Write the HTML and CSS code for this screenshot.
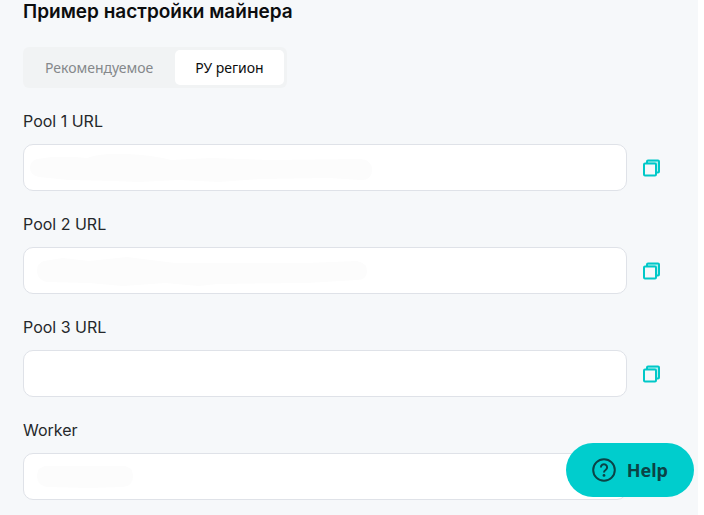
FILE: index.html
```html
<!DOCTYPE html>
<html lang="ru">
<head>
  <meta charset="UTF-8">
  <meta name="viewport" content="width=device-width, initial-scale=1.0">
  <title>Пример настройки майнера</title>
  <link rel="stylesheet" href="styles.css">
</head>
<body>

<main class="miner-settings">
  <h1 class="title">Пример настройки майнера</h1>

  <div class="tabs">
    <button class="tab" type="button">Рекомендуемое</button>
    <button class="tab active" type="button">РУ регион</button>
  </div>

  <div class="field">
    <label for="pool1">Pool 1 URL</label>
    <div class="field-row">
      <div class="input-box">
        <input id="pool1" type="text" readonly>
        <svg class="mask" width="352" height="32" viewBox="0 0 352 32" aria-hidden="true">
          <path d="M8 7Q30 3 58 6Q72 1 98 2Q124 3 142 8L182 6L240 8L332 7Q343 8 343 18Q343 28 332 28L300 26L230 27L190 30L150 28L110 30L84 29L40 28L10 25Q1 23 1 16Q1 9 8 7Z"/>
        </svg>
      </div>
      <button class="copy-btn" type="button" aria-label="Copy Pool 1 URL">
        <svg width="17" height="18" viewBox="0 0 17 18">
          <path d="M4 4V2.5Q4 1.5 5 1.5H15Q16 1.5 16 2.5V12.5Q16 13.5 15 13.5H13.5"/>
          <rect x="1" y="4.5" width="12" height="12" rx="1"/>
        </svg>
      </button>
    </div>
  </div>

  <div class="field">
    <label for="pool2">Pool 2 URL</label>
    <div class="field-row">
      <div class="input-box">
        <input id="pool2" type="text" readonly>
        <svg class="mask" width="352" height="32" viewBox="0 0 352 32" aria-hidden="true">
          <path d="M15 6L34 3L60 6L98 2L146 8L220 8L278 8L328 6Q338 8 338 16Q338 25 328 25L278 28L188 29L170 31L136 28L94 31L60 28L18 27Q8 25 8 16Q8 8 15 6Z"/>
        </svg>
      </div>
      <button class="copy-btn" type="button" aria-label="Copy Pool 2 URL">
        <svg width="17" height="18" viewBox="0 0 17 18">
          <path d="M4 4V2.5Q4 1.5 5 1.5H15Q16 1.5 16 2.5V12.5Q16 13.5 15 13.5H13.5"/>
          <rect x="1" y="4.5" width="12" height="12" rx="1"/>
        </svg>
      </button>
    </div>
  </div>

  <div class="field">
    <label for="pool3">Pool 3 URL</label>
    <div class="field-row">
      <div class="input-box">
        <input id="pool3" type="text" readonly>
      </div>
      <button class="copy-btn" type="button" aria-label="Copy Pool 3 URL">
        <svg width="17" height="18" viewBox="0 0 17 18">
          <path d="M4 4V2.5Q4 1.5 5 1.5H15Q16 1.5 16 2.5V12.5Q16 13.5 15 13.5H13.5"/>
          <rect x="1" y="4.5" width="12" height="12" rx="1"/>
        </svg>
      </button>
    </div>
  </div>

  <div class="field">
    <label for="worker">Worker</label>
    <div class="field-row">
      <div class="input-box">
        <input id="worker" type="text" readonly>
        <svg class="mask" width="352" height="32" viewBox="0 0 352 32" aria-hidden="true">
          <path d="M16 5H96Q104 7 104 15Q104 25 94 26L60 27L18 26Q8 24 8 15Q8 7 16 5Z"/>
        </svg>
      </div>
    </div>
  </div>
</main>

<button class="help-btn" type="button">
  <svg width="24" height="24" viewBox="0 0 24 24" aria-hidden="true">
    <circle cx="12" cy="12" r="10.8"/>
    <path d="M8.9 9.4A3.1 3.1 0 1 1 13.6 12Q12 13 12 14.6"/>
    <circle class="dot" cx="12" cy="17.4" r="1.4"/>
  </svg>
  Help
</button>

</body>
</html>
```
FILE: styles.css
```css
* {
  box-sizing: border-box;
}

body {
  font-family: Inter, "Noto Sans", sans-serif;
  background-color: #fff;
  color: #25282b;
  margin: 0;
  height: 100vh;
  overflow: hidden;
}

button, input {
  font-family: "Noto Sans", sans-serif;
  font-size: 16px;
}

button {
  border: none;
  padding: 0;
  cursor: pointer;
}

.miner-settings {
  background-color: #f6f8fa;
  min-height: 100vh;
  margin-right: 6px;
  padding: 0 23px;
}

.title {
  color: #0c0d0e;
  font-size: 19px;
  font-weight: 600;
  line-height: 24px;
  margin: 0 0 23px;
}

.tabs {
  display: inline-flex;
  background-color: #f1f3f4;
  border-radius: 6px;
  padding: 3px;
  margin-bottom: 21px;
  vertical-align: top;
}

.tab {
  background: none;
  border-radius: 5px;
  color: #85888b;
  font-size: 14px;
  line-height: 35px;
  padding: 0 22px 0 19px;
}

.tab.active {
  background-color: #fff;
  color: #0c0d0e;
  padding: 0 20px;
}

.field {
  margin-bottom: 21px;
}

.field label {
  display: block;
  font-size: 16px;
  line-height: 24px;
  margin-bottom: 11px;
}

.field-row {
  display: flex;
  align-items: center;
  gap: 16px;
  padding-right: 15px;
}

.input-box {
  position: relative;
  flex: 1;
  margin-right: 33px;
}

.input-box:not(:last-child) {
  margin-right: 0;
}

.input-box input {
  display: block;
  width: 100%;
  height: 47px;
  background-color: #fff;
  border: 1px solid #dfe2e8;
  border-radius: 10px;
  padding: 0 14px;
  outline: none;
}

.mask {
  position: absolute;
  left: 6px;
  top: 8px;
  fill: #fcfcfc;
  pointer-events: none;
}

.copy-btn {
  background: none;
  height: 18px;
}

.copy-btn svg {
  display: block;
  fill: #f6f8fa;
  stroke: #00c8c8;
  stroke-width: 2;
}

.copy-btn path {
  fill: #b5f0ef;
}

.help-btn {
  position: fixed;
  right: 10px;
  bottom: 18px;
  display: flex;
  align-items: center;
  gap: 11px;
  height: 54px;
  padding: 0 26px;
  background-color: #00cdcd;
  border-radius: 27px;
  color: #0b4346;
  font-size: 18px;
  font-weight: bold;
}

.help-btn svg {
  fill: none;
  stroke: #0b4346;
  stroke-width: 2;
}

.help-btn .dot {
  fill: #0b4346;
  stroke: none;
}
```
